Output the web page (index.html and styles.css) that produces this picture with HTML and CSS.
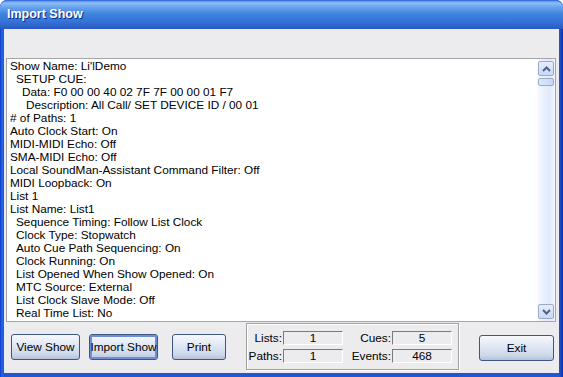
FILE: index.html
```html
<!DOCTYPE html>
<html lang="en">
<head>
    <meta charset="UTF-8">
    <meta name="viewport" content="width=device-width, initial-scale=1.0">
    <title>Import Show</title>
    <link rel="stylesheet" href="styles.css">
</head>
<body>
    <div class="window">
        <header class="titlebar">Import Show</header>
        <main class="client">
            <div class="report">
                <div class="lines">
                    <p>Show Name: Li'lDemo</p>
                    <p class="in1">SETUP CUE:</p>
                    <p class="in2">Data: F0 00 00 40 02 7F 7F 00 00 01 F7</p>
                    <p class="in3">Description: All Call/ SET DEVICE ID / 00 01</p>
                    <p># of Paths: 1</p>
                    <p>Auto Clock Start: On</p>
                    <p>MIDI-MIDI Echo: Off</p>
                    <p>SMA-MIDI Echo: Off</p>
                    <p>Local SoundMan-Assistant Command Filter: Off</p>
                    <p>MIDI Loopback: On</p>
                    <p>List 1</p>
                    <p>List Name: List1</p>
                    <p class="in1">Sequence Timing: Follow List Clock</p>
                    <p class="in1">Clock Type: Stopwatch</p>
                    <p class="in1">Auto Cue Path Sequencing: On</p>
                    <p class="in1">Clock Running: On</p>
                    <p class="in1">List Opened When Show Opened: On</p>
                    <p class="in1">MTC Source: External</p>
                    <p class="in1">List Clock Slave Mode: Off</p>
                    <p class="in1">Real Time List: No</p>
                </div>
                <div class="scrollbar">
                    <div class="sb-btn">
                        <svg width="9" height="6" viewBox="0 0 9 6"><path d="M1 5 L4.5 1.5 L8 5" fill="none" stroke="#4d6185" stroke-width="2"/></svg>
                    </div>
                    <div class="sb-thumb"></div>
                    <div class="sb-track"></div>
                    <div class="sb-btn">
                        <svg width="9" height="6" viewBox="0 0 9 6"><path d="M1 1 L4.5 4.5 L8 1" fill="none" stroke="#4d6185" stroke-width="2"/></svg>
                    </div>
                </div>
            </div>
            <div class="bottom">
                <button class="btn btn-view">View Show</button>
                <button class="btn btn-import focused">Import Show</button>
                <button class="btn btn-print">Print</button>
                <div class="stats">
                    <span class="label">Lists:</span>
                    <span class="field">1</span>
                    <span class="label">Cues:</span>
                    <span class="field">5</span>
                    <span class="label">Paths:</span>
                    <span class="field">1</span>
                    <span class="label">Events:</span>
                    <span class="field">468</span>
                </div>
                <button class="btn btn-exit">Exit</button>
            </div>
        </main>
    </div>
</body>
</html>
```

FILE: styles.css
```css
body {
    margin: 0;
    padding: 0;
    background-color: #ffffff;
    font-family: "Liberation Sans", Arial, sans-serif;
}
.window {
    width: 563px;
    height: 377px;
    box-sizing: border-box;
    display: flex;
    flex-direction: column;
    background: linear-gradient(to right, #0a3ad0, #2a66e0 2px, #1f58d4 4px, #1f58d4 559px, #1846c4 561px, #0a2fb0);
    border-radius: 7px 7px 0 0;
}
.titlebar {
    height: 29px;
    box-sizing: border-box;
    padding: 6px 0 0 7px;
    color: #ffffff;
    font-size: 12.5px;
    font-weight: bold;
    text-shadow: 1px 1px 0 #0b2a86;
    border-radius: 7px 7px 0 0;
    border-top: 1px solid #3a6fe0;
    background: linear-gradient(to bottom, #5a96e8 0, #8cbef3 2px, #6aa4ec 6px, #3f82de 13px, #3574d8 20px, #2d60c8 26px, #2953be 29px);
}
.client {
    flex: 1;
    margin: 0 4px 4px 4px;
    padding: 29px 3px 0 2px;
    background-color: #ecebee;
    display: flex;
    flex-direction: column;
}
.report {
    height: 264px;
    box-sizing: border-box;
    display: flex;
    background-color: #ffffff;
    border: 1px solid #a5a5a8;
}
.lines {
    flex: 1;
    padding: 1px 3px;
    font-size: 11.8px;
    line-height: 13px;
    color: #000000;
    overflow: hidden;
}
.lines p {
    margin: 0;
    white-space: pre;
}
.lines .in1 {
    padding-left: 6px;
}
.lines .in2 {
    padding-left: 12px;
}
.lines .in3 {
    padding-left: 16px;
}
.scrollbar {
    width: 17px;
    padding: 1px 1px 1px 0;
    display: flex;
    flex-direction: column;
    background: linear-gradient(to right, #fbfcfe, #eef3fd 4px, #dfe8fa 13px, #f4f7fe);
}
.sb-btn {
    height: 15px;
    box-sizing: border-box;
    margin: 1px 0 1px 1px;
    border: 1px solid #9aaac8;
    border-radius: 2px;
    background: linear-gradient(to bottom, #e6eefc, #c8d8f6);
    display: flex;
    align-items: center;
    justify-content: center;
}
.sb-thumb {
    height: 8px;
    box-sizing: border-box;
    margin: 1px 0 0 1px;
    border: 1px solid #9aaac8;
    border-radius: 2px;
    background: linear-gradient(to right, #dce7fb, #c6d6f6);
}
.sb-track {
    flex: 1;
}
.bottom {
    display: flex;
    align-items: flex-start;
    padding-left: 5px;
}
.btn {
    height: 26px;
    margin-top: 12px;
    padding: 0;
    box-sizing: border-box;
    white-space: nowrap;
    font-family: "Liberation Sans", Arial, sans-serif;
    font-size: 11.8px;
    color: #000000;
    border: 1px solid #3e5680;
    border-radius: 3px;
    background: linear-gradient(to bottom, #f6f8fc 0, #e2e9f4 40%, #cdd8ea 80%, #b4c3da 100%);
}
.btn.focused {
    box-shadow: inset 0 0 0 2px #6e8fd6;
}
.btn-view {
    width: 69px;
}
.btn-import {
    width: 69px;
    margin-left: 9px;
}
.btn-print {
    width: 54px;
    margin-left: 14px;
}
.btn-exit {
    width: 75px;
    margin-left: 20px;
    margin-top: 13px;
}
.stats {
    width: 213px;
    height: 47px;
    box-sizing: border-box;
    margin: 1px 0 0 20px;
    padding: 7px 0 0 1px;
    border: 1px solid #a0a0a0;
    box-shadow: inset 1px 1px 0 #ffffff, 1px 1px 0 #ffffff;
    display: grid;
    grid-template-columns: 35px 60px 49px 60px;
    grid-auto-rows: 14px;
    row-gap: 4px;
    font-size: 11.8px;
}
.stats .label {
    text-align: right;
    padding-right: 1px;
    line-height: 14px;
}
.stats .field {
    box-sizing: border-box;
    border: 1px solid;
    border-color: #7a7a7a #ffffff #ffffff #7a7a7a;
    text-align: center;
    line-height: 12px;
}
```
